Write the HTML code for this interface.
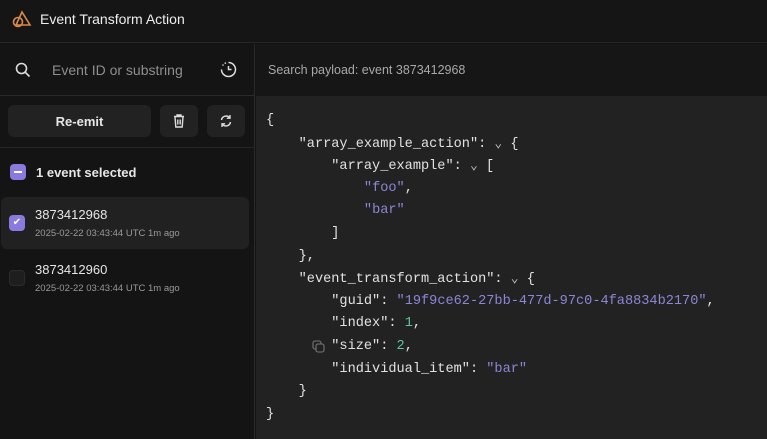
<!DOCTYPE html>
<html><head><meta charset="utf-8"><style>
*{margin:0;padding:0;box-sizing:border-box}
body{width:767px;height:439px;overflow:hidden;background:#141414;font-family:"Liberation Sans",sans-serif;color:#e6e6e6;position:relative}
.abs{position:absolute}
.hdr{left:0;top:0;width:767px;height:43px;background:#151515;border-bottom:1px solid #262626}
.side{left:0;top:44px;width:255px;height:395px;background:#141414;border-right:1px solid #2a2a2a}
.btn{background:#222;border-radius:6px;position:absolute}
.code{left:256px;top:96px;width:511px;height:343px;background:#222}
.pay{left:256px;top:44px;width:511px;height:52px;background:#161616}
pre{font-family:"Liberation Mono",monospace;font-size:13.6px;line-height:22.6px;color:#e2e2e2;position:absolute;left:266px;top:110px}
pre div{height:22.6px}
.s{color:#8b86d6}.n{color:#5fc4a4}.c{color:#bbb;font-size:13px}
</style></head><body>
<div class="abs hdr">
<svg class="abs" style="left:10px;top:9px" width="22" height="20" viewBox="0 0 22 20"><polygon points="12,3 20,16 6,16" fill="none" stroke="#d98a4a" stroke-width="1.6"/><circle cx="8" cy="13" r="4.5" fill="none" stroke="#d98a4a" stroke-width="1.6"/></svg>
<div class="abs" style="left:40px;top:11px;font-size:14px;color:#eee">Event Transform Action</div>
</div>
<div class="abs side">
<div class="abs" style="left:0;top:0;width:255px;height:52px;border-bottom:1px solid #2a2a2a"></div>
<svg class="abs" style="left:15px;top:18px" width="16" height="16" viewBox="0 0 16 16"><circle cx="6.5" cy="6.5" r="5" fill="none" stroke="#ddd" stroke-width="1.6"/><line x1="10.3" y1="10.3" x2="14.5" y2="14.5" stroke="#ddd" stroke-width="1.6"/></svg>
<div class="abs" style="left:52px;top:18px;font-size:14px;color:#8e8e8e">Event ID or substring</div>
<svg class="abs" style="left:220px;top:17px" width="17" height="17" viewBox="0 0 17 17"><path d="M8.5 1.5a7 7 0 1 1-7 7" fill="none" stroke="#ddd" stroke-width="1.5"/><path d="M8.5 5v3.5h3" fill="none" stroke="#ddd" stroke-width="1.5"/><circle cx="3" cy="4" r=".8" fill="#ddd"/><circle cx="5.3" cy="2.1" r=".8" fill="#ddd"/></svg>
<div class="btn" style="left:8px;top:61px;width:143px;height:32px"></div>
<div class="abs" style="left:8px;top:70px;width:143px;text-align:center;font-size:13px;font-weight:bold">Re-emit</div>
<div class="btn" style="left:160px;top:61px;width:38px;height:32px"></div>
<svg class="abs" style="left:172px;top:69px" width="14" height="16" viewBox="0 0 14 16"><path d="M2 3.5h10M5 3.5V2h4v1.5M3 3.5l.8 10.5h6.4L11 3.5M5.8 6.5v5M8.2 6.5v5" fill="none" stroke="#ddd" stroke-width="1.4"/></svg>
<div class="btn" style="left:207px;top:61px;width:38px;height:32px"></div>
<svg class="abs" style="left:219px;top:70px" width="14" height="14" viewBox="0 0 14 14"><path d="M2.5 6a4.6 4.6 0 0 1 8.3-2M11.5 8a4.6 4.6 0 0 1-8.3 2" fill="none" stroke="#ddd" stroke-width="1.5"/><path d="M11 1v3.2H7.8M3 13V9.8h3.2" fill="none" stroke="#ddd" stroke-width="1.4"/></svg>
<div class="abs" style="left:0;top:103px;width:255px;border-top:1px solid #262626"></div>
<div class="abs" style="left:10px;top:120px;width:16px;height:16px;border-radius:4px;background:#8a7ae0"><div style="position:absolute;left:4px;top:7px;width:8px;height:2px;background:#fff"></div></div>
<div class="abs" style="left:36px;top:121px;font-size:13px;font-weight:bold">1 event selected</div>
<div class="abs" style="left:1px;top:153px;width:248px;height:52px;background:#212121;border-radius:6px"></div>
<div class="abs" style="left:9px;top:171px;width:16px;height:16px;border-radius:4px;background:#8a7ae0;color:#fff;font-size:10px;text-align:center;line-height:16px">✔</div>
<div class="abs" style="left:35px;top:163px;font-size:13px">3873412968</div>
<div class="abs" style="left:35px;top:184px;font-size:9.5px;color:#999">2025-02-22 03:43:44 UTC 1m ago</div>
<div class="abs" style="left:9px;top:226px;width:16px;height:16px;border-radius:4px;background:#1e1e1e;border:1px solid #2c2c2c"></div>
<div class="abs" style="left:35px;top:218px;font-size:13px">3873412960</div>
<div class="abs" style="left:35px;top:239px;font-size:9.5px;color:#999">2025-02-22 03:43:44 UTC 1m ago</div>
</div>
<div class="abs pay"><div class="abs" style="left:12px;top:19px;font-size:12.5px;color:#a8a8a8">Search payload: event 3873412968</div></div>
<div class="abs code"></div>
<pre><div>{</div><div>    "array_example_action": <span class="c">⌄</span> {</div><div>        "array_example": <span class="c">⌄</span> [</div><div>            <span class="s">"foo"</span>,</div><div>            <span class="s">"bar"</span></div><div>        ]</div><div>    },</div><div>    "event_transform_action": <span class="c">⌄</span> {</div><div>        "guid": <span class="s">"19f9ce62-27bb-477d-97c0-4fa8834b2170"</span>,</div><div>        "index": <span class="n">1</span>,</div><div>        "size": <span class="n">2</span>,</div><div>        "individual_item": <span class="s">"bar"</span></div><div>    }</div><div>}</div></pre>
<svg class="abs" style="left:312px;top:340px" width="13" height="13" viewBox="0 0 13 13"><rect x="1" y="1" width="8" height="8" rx="2" fill="none" stroke="#777" stroke-width="1.1"/><rect x="4" y="4" width="8" height="8" rx="2" fill="#222" stroke="#777" stroke-width="1.1"/></svg>
</body></html>
